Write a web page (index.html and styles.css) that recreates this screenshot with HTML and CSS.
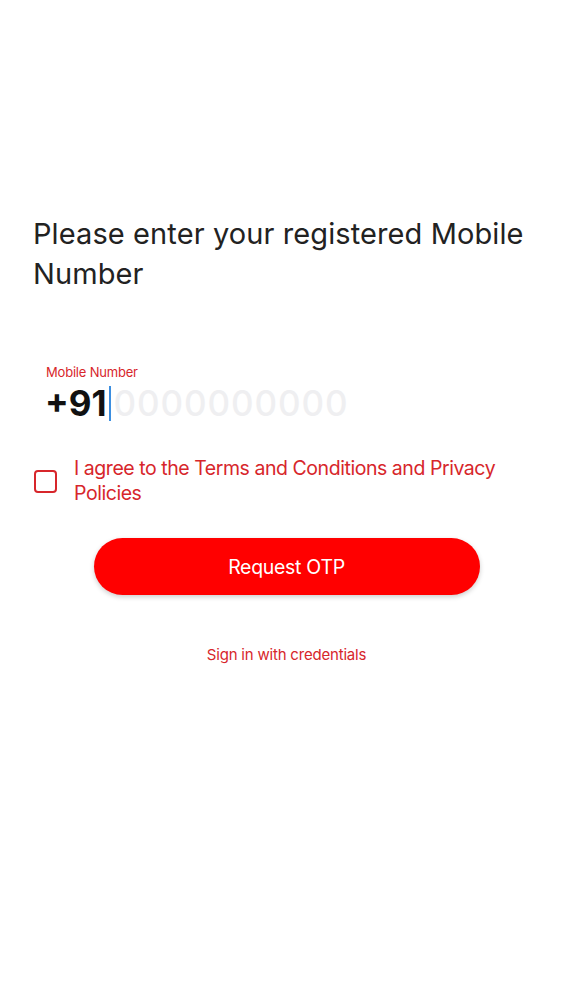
FILE: index.html
```html
<!DOCTYPE html>
<html lang="en">
<head>
    <meta charset="UTF-8">
    <meta name="viewport" content="width=device-width, initial-scale=1.0">
    <title>Login</title>
    <link rel="stylesheet" href="styles.css">
</head>
<body>
    <div class="login-container">
        <h1 class="login-title">Please enter your registered Mobile Number</h1>

        <div class="mobile-field">
            <label for="mobile">Mobile Number</label>
            <div class="mobile-input">
                <span class="prefix">+91</span>
                <span class="cursor"></span>
                <input id="mobile" type="tel" placeholder="0000000000">
            </div>
        </div>

        <label class="agree-row">
            <span class="checkbox"></span>
            <span class="agree-text">I agree to the Terms and Conditions and Privacy Policies</span>
        </label>

        <div class="actions">
            <button class="btn-otp">Request OTP</button>
            <a class="link-credentials" href="#">Sign in with credentials</a>
        </div>
    </div>
</body>
</html>
```

FILE: styles.css
```css
body {
    font-family: Inter, "Noto Sans", sans-serif;
    margin: 0;
    background-color: #fff;
    color: #222;
}
.login-container {
    padding: 214px 30px 0 33px;
}
.login-title {
    font-size: 29px;
    font-weight: 400;
    line-height: 40px;
    margin: 0;
    color: #222;
    letter-spacing: 0.1px;
}
.mobile-field {
    margin-top: 70px;
    padding-left: 13px;
}
.mobile-field label {
    display: block;
    font-size: 13px;
    line-height: 16px;
    color: #d7262b;
    letter-spacing: -0.2px;
}
.mobile-input {
    display: flex;
    align-items: center;
    height: 40px;
    margin-top: 3px;
}
.prefix {
    font-size: 35px;
    font-weight: 700;
    color: #111;
    letter-spacing: 0;
    margin-left: -1px;
}
.cursor {
    width: 2px;
    height: 35px;
    background-color: #3b8ee0;
    margin-left: 2px;
}
.mobile-input input {
    border: none;
    outline: none;
    padding: 0;
    margin-left: 3px;
    font-family: inherit;
    font-size: 35px;
    font-weight: 500;
    letter-spacing: 0.9px;
    width: 260px;
    background: transparent;
}
.mobile-input input::placeholder {
    color: #efeff1;
}
.agree-row {
    display: flex;
    align-items: center;
    gap: 17px;
    margin-top: 33px;
    padding-left: 1px;
}
.checkbox {
    flex-shrink: 0;
    width: 19px;
    height: 19px;
    border: 2.5px solid #d7262b;
    border-radius: 4px;
}
.agree-text {
    font-size: 19.5px;
    line-height: 25px;
    color: #d7262b;
    letter-spacing: -0.45px;
}
.actions {
    display: flex;
    flex-direction: column;
    align-items: center;
    margin-left: -33px;
    margin-right: -30px;
    padding-left: 10px;
}
.btn-otp {
    margin-top: 32px;
    width: 386px;
    height: 57px;
    border: none;
    border-radius: 29px;
    background-color: #ff0000;
    color: #fff;
    font-family: inherit;
    font-size: 19.5px;
    letter-spacing: -0.3px;
    box-shadow: 0 2px 5px rgba(0,0,0,0.2);
    cursor: pointer;
}
.link-credentials {
    margin-top: 50px;
    font-size: 15px;
    color: #d7262b;
    text-decoration: none;
    letter-spacing: -0.2px;
}
```
